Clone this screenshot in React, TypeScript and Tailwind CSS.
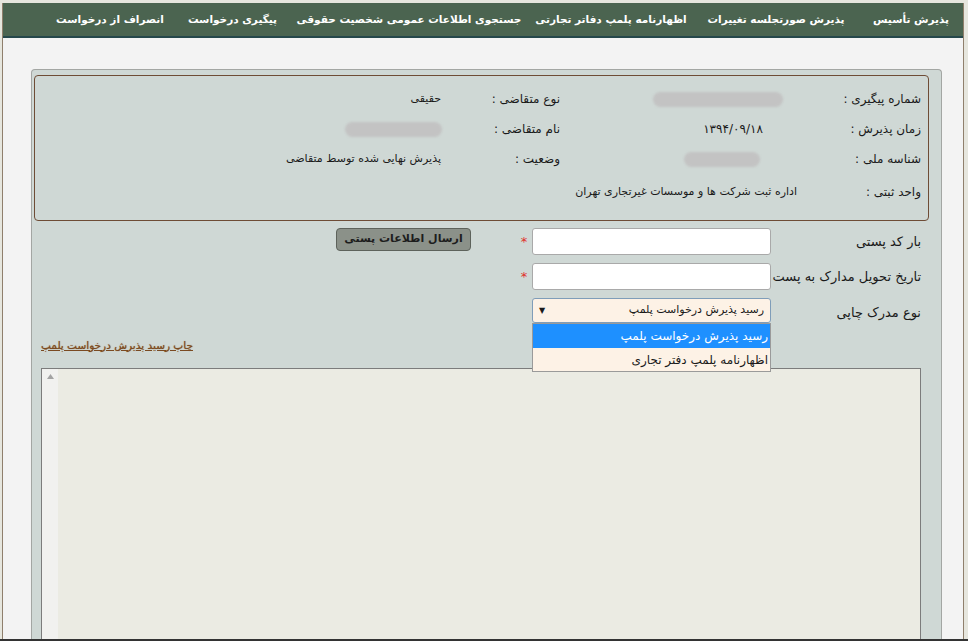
import React from "react";

const navItems = [
  { t: "پذیرش تأسیس", w: "w-[68px]" },
  { t: "پذیرش صورتجلسه تغییرات", w: "w-[122px]" },
  { t: "اظهارنامه پلمپ دفاتر تجارتی", w: "w-[128px]" },
  { t: "جستجوی اطلاعات عمومی شخصیت حقوقی", w: "w-[196px]" },
  { t: "پیگیری درخواست", w: "w-[77px]" },
  { t: "انصراف از درخواست", w: "w-[88px]" },
];

function Pill({ w }: { w: string }) {
  return <span className={`inline-block h-[15px] rounded-full bg-[#c3c3c3] blur-[1px] align-middle ${w}`} />;
}

export default function App() {
  return (
    <div
      dir="rtl"
      className="relative h-[641px] w-[968px] overflow-hidden bg-[#e6e6de] pt-[3px] font-['DejaVu_Sans',sans-serif] text-[12px] text-[#1a1a1a]"
    >
      <div className="ml-[2px] mr-[4px] flex h-full flex-col border-l border-r border-[#8f7f6c] bg-[#f3f3f3]">
        {/* nav */}
        <div className="flex h-[35px] shrink-0 items-center gap-[40px] border-b-2 border-[#25474b] bg-[#4b6450] pr-[18px] text-[10.5px] font-bold text-white">
          {navItems.map((n) => (
            <div key={n.t} className={`${n.w} flex shrink-0 justify-center whitespace-nowrap`}>
              <span>{n.t}</span>
            </div>
          ))}
        </div>

        {/* panel */}
        <div className="ml-[28px] mr-[21px] mt-[31px] flex flex-1 flex-col rounded-t-[4px] border border-b-0 border-[#a3a6a3] bg-[#cfd8d5]">
          {/* info box */}
          <div className="ml-[2px] mr-[12px] mt-[5px] h-[146px] rounded-[4px] border border-[#6e4c36] pt-[8px]">
            <div className="grid grid-cols-[121px_240px_110px_1fr] grid-rows-[30px_30px_30px_36px] items-center pr-[7px]">
              <div>شماره پیگیری :</div>
              <div className="pl-[76px] text-center"><Pill w="w-[130px]" /></div>
              <div>نوع متقاضی :</div>
              <div className="pr-[9px] text-[11px]">حقیقی</div>

              <div>زمان پذیرش :</div>
              <div className="pl-[106px] text-center text-[12px] tracking-[3.5px]">۱۳۹۴/۰۹/۱۸</div>
              <div>نام متقاضی :</div>
              <div className="pr-[8px]"><Pill w="w-[97px]" /></div>

              <div>شناسه ملی :</div>
              <div className="pl-[84px] text-center"><Pill w="w-[76px]" /></div>
              <div>وضعیت :</div>
              <div className="pr-[9px] text-[11px]">پذیرش نهایی شده توسط متقاضی</div>

              <div>واحد ثبتی :</div>
              <div className="col-span-3 pr-[3px] text-[11px]">اداره ثبت شرکت ها و موسسات غیرتجاری تهران</div>
            </div>
          </div>

          {/* form rows */}
          <div className="mt-[7px] flex flex-col gap-[8px] pr-[20px]">
            <div className="flex h-[27px] items-center">
              <div className="w-[150px] text-[13px]">بار کد پستی</div>
              <div className="h-[27px] w-[239px] rounded-[3px] border border-[#a9a9a9] bg-white" />
              <div className="w-[16px] text-center text-[13px] text-[#e0302a]">*</div>
              <button className="mr-[45px] h-[23px] w-[135px] self-start rounded-[4px] border border-[#5d625b] bg-[#8b9189] text-[11px] font-bold text-[#1d1d1d]">
                ارسال اطلاعات پستی
              </button>
            </div>
            <div className="flex h-[27px] items-center">
              <div className="w-[150px] whitespace-nowrap text-[13px]">تاریخ تحویل مدارک به پست</div>
              <div className="h-[27px] w-[239px] rounded-[3px] border border-[#a9a9a9] bg-white" />
              <div className="w-[16px] text-center text-[13px] text-[#e0302a]">*</div>
            </div>
            <div className="flex h-[25px] items-center">
              <div className="w-[150px] pt-[4px] text-[13px]">نوع مدرک چاپی</div>
              <div className="relative w-[239px]">
                <div className="flex h-[25px] items-center justify-between rounded-[3px] border border-[#7f9db9] bg-[#fdf2e6] pl-[6px] pr-[6px] text-[11px]">
                  <span>رسید پذیرش درخواست پلمپ</span>
                  <span className="text-[8px]">▼</span>
                </div>
                <div className="absolute right-0 top-full z-10 w-[239px] border border-[#9a9a9a] bg-[#fdf2e6] text-[12px]">
                  <div className="flex h-[24px] items-center bg-[#1e90ff] pr-[2px] text-white">رسید پذیرش درخواست پلمپ</div>
                  <div className="flex h-[23px] items-center pr-[2px]">اظهارنامه پلمپ دفتر تجاری</div>
                </div>
              </div>
            </div>
          </div>

          {/* link row */}
          <div className="flex h-[45px] items-center justify-end pl-[9px]">
            <a className="text-[10.5px] text-[#7a4a22] underline [text-shadow:0_0_1px_#9a6a3a]">
              چاپ رسید پذیرش درخواست پلمپ
            </a>
          </div>

          {/* textarea */}
          <div className="ml-[9px] mr-[20px] flex flex-1 border border-b-0 border-[#7c7c7c] bg-[#ebebe3]">
            <div className="flex-1" />
            <div className="flex w-[16px] justify-center bg-[#f1f1ef] pt-[5px]">
              <svg width="7" height="5" viewBox="0 0 7 5"><path d="M0 5 L3.5 0 L7 5 Z" fill="#a3a3a3" /></svg>
            </div>
          </div>
        </div>
      </div>
      <div className="absolute bottom-0 left-0 h-[2px] w-full bg-[#333]" />
    </div>
  );
}
